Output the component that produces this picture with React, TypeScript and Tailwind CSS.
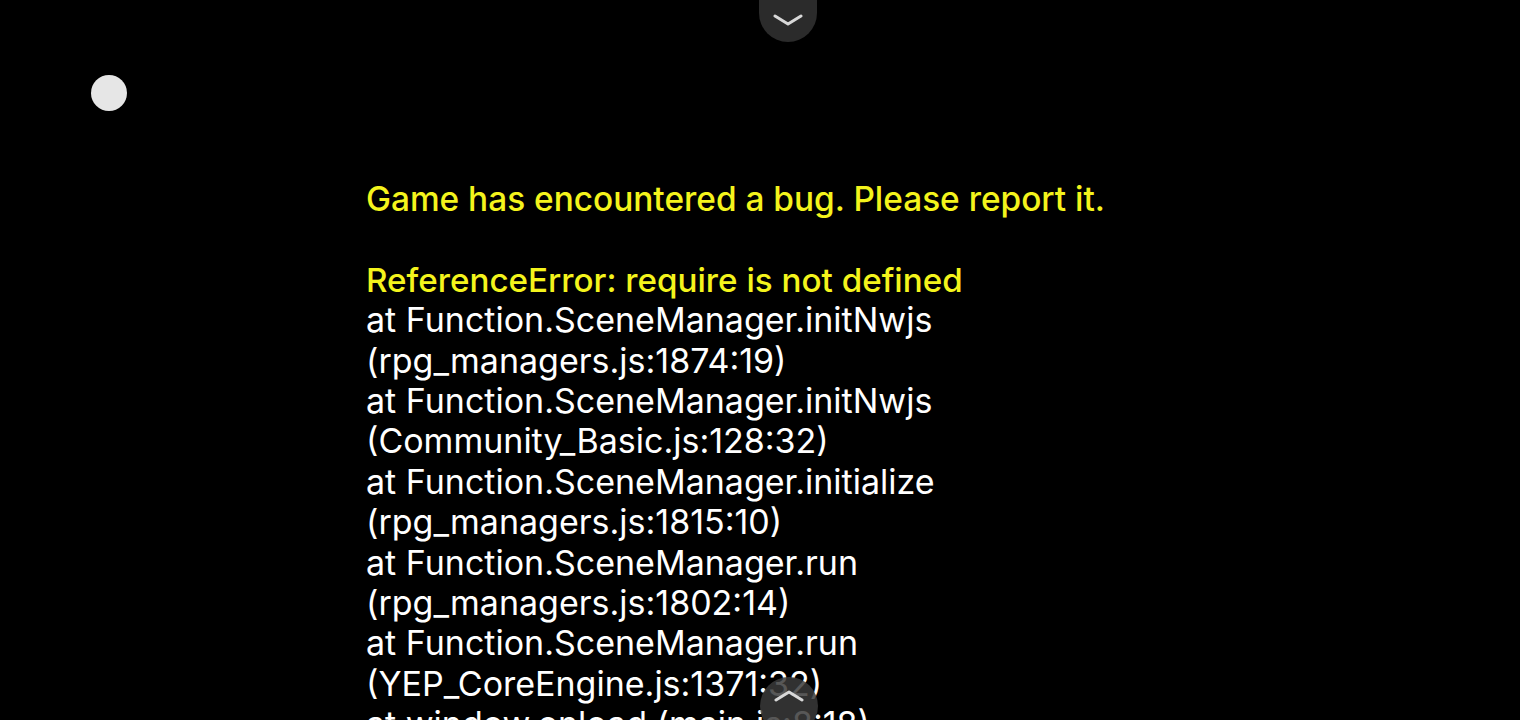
import React from "react";

const trace = [
  "at Function.SceneManager.initNwjs",
  "(rpg_managers.js:1874:19)",
  "at Function.SceneManager.initNwjs",
  "(Community_Basic.js:128:32)",
  "at Function.SceneManager.initialize",
  "(rpg_managers.js:1815:10)",
  "at Function.SceneManager.run",
  "(rpg_managers.js:1802:14)",
  "at Function.SceneManager.run",
  "(YEP_CoreEngine.js:1371:32)",
  "at window.onload (main.js:8:18)",
];

const App: React.FC = () => {
  return (
    <div className="relative w-full h-[720px] bg-black overflow-hidden" style={{ fontFamily: 'Inter, "Liberation Sans", sans-serif' }}>
      {/* top pull tab */}
      <div className="absolute left-[759px] top-0 w-[58px] h-[42px] bg-[#2b2b2b] rounded-b-[29px] flex items-center justify-center">
        <svg width="30" height="14" viewBox="0 0 30 14" fill="none" className="mt-[-2px]">
          <path d="M2 3 L15 11 L28 3" stroke="#d8d8d8" strokeWidth="3" strokeLinecap="round" strokeLinejoin="round" />
        </svg>
      </div>

      {/* floating dot */}
      <div className="absolute left-[91px] top-[75px] w-9 h-9 rounded-full bg-[#e6e6e6]" />

      {/* error text */}
      <div className="pl-[366px] pt-[179px] text-[34px] leading-[40.4px] text-white">
        <div className="text-[#f4f41c] font-medium text-[33.4px]">Game has encountered a bug. Please report it.</div>
        <div className="h-[40.4px]" />
        <div className="text-[#f4f41c] font-medium text-[33.2px]">ReferenceError: require is not defined</div>
        {trace.map((line, i) => (
          <div key={i} className="whitespace-nowrap">{line}</div>
        ))}
      </div>

      {/* bottom scroll button */}
      <div className="absolute left-[760px] top-[677px] w-[58px] h-[58px] rounded-full bg-[#3a3a3a]/85 flex items-start justify-center pt-[12px]">
        <svg width="30" height="14" viewBox="0 0 30 14" fill="none">
          <path d="M2 11 L15 3 L28 11" stroke="#d8d8d8" strokeWidth="3" strokeLinecap="round" strokeLinejoin="round" />
        </svg>
      </div>
    </div>
  );
};

export default App;
